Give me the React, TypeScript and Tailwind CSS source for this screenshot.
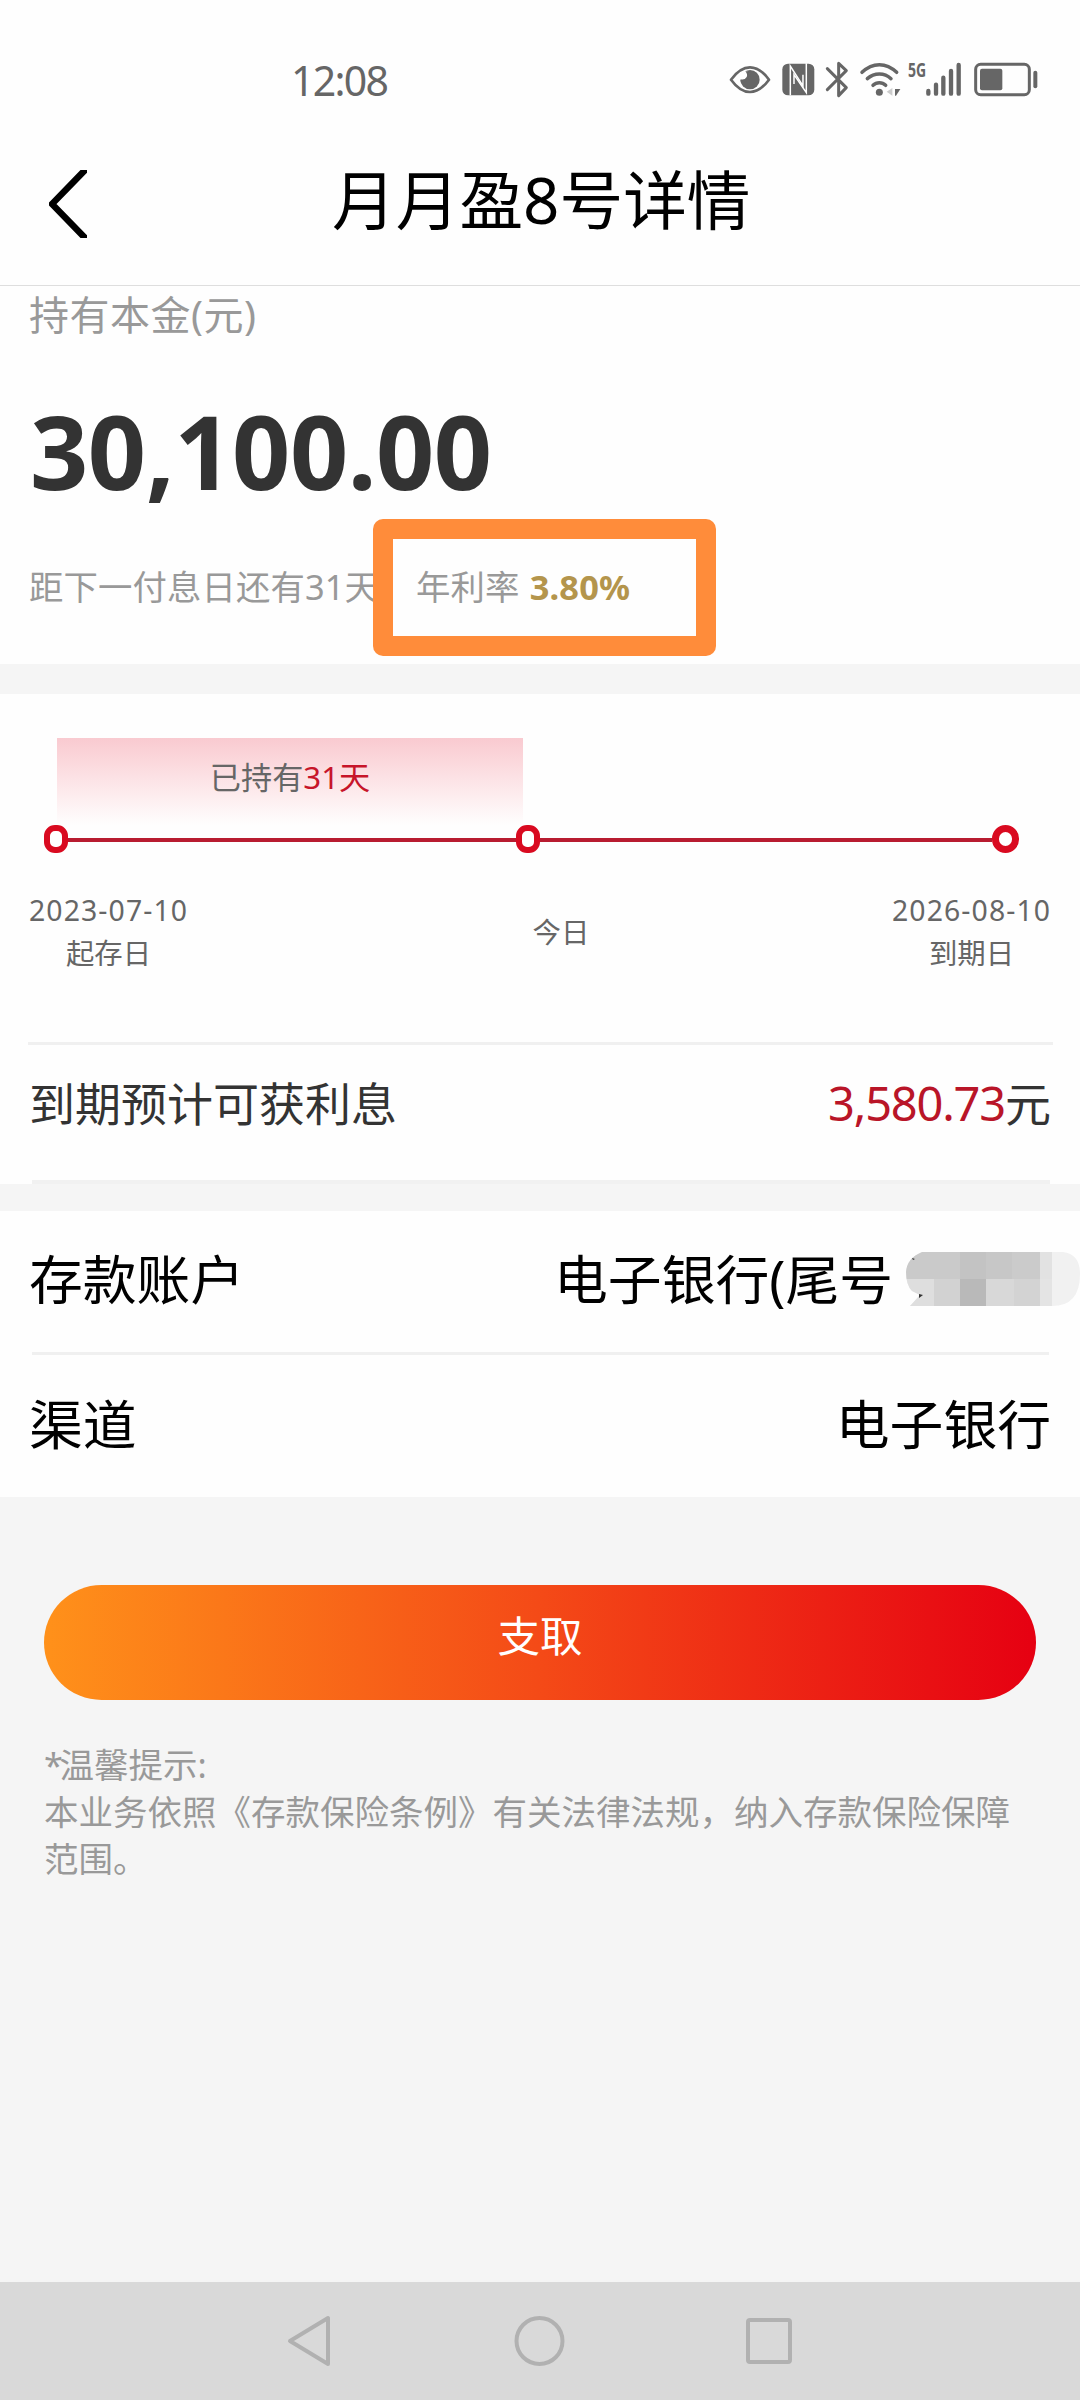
import type { ReactNode } from "react";

function StatusIcons() {
  return (
    <div className="flex h-20 text-[#666]">
      {/* eye comfort */}
      <svg className="h-20 w-[50px]" viewBox="80 0 150 240" fill="none">
        <path d="M92 119 Q119 82 149 82 Q179 82 206 119 Q179 156 149 156 Q119 156 92 119 Z" stroke="currentColor" strokeWidth="8" strokeLinejoin="round" />
        <circle cx="149" cy="119" r="29" fill="currentColor" />
        <path d="M117 121 Q117 95 136 90 Q152 100 147 113 Q141 128 117 121 Z" fill="white" />
        <path d="M135 94 Q143 104 139 111 Q133 121 121 118 L120 124 Q134 130 146 121 Q153 106 146 94 Z" fill="currentColor" />
      </svg>
      {/* NFC */}
      <svg className="h-20 w-[43.3px]" viewBox="230 0 130 240" fill="none">
        <rect x="246" y="71" width="96" height="95" rx="17" fill="currentColor" />
        <path d="M270 166 V78 L308 138 V104" stroke="white" strokeWidth="4.5" />
        <path d="M280 70 L318 128 V70" stroke="white" strokeWidth="0" />
        <path d="M318 70 V158 L281 104 V132" stroke="white" strokeWidth="4.5" />
      </svg>
      {/* bluetooth */}
      <svg className="h-20 w-[33.3px]" viewBox="360 0 100 240" fill="none">
        <path d="M382 86 L439 143 L416 167 V70 L439 92 L382 149" stroke="currentColor" strokeWidth="9" strokeLinecap="round" strokeLinejoin="round" />
      </svg>
      {/* wifi */}
      <svg className="h-20 w-[51.7px]" viewBox="460 0 155 240" fill="none">
        <path d="M484 97 Q508 74 536 74 Q564 74 588 97" stroke="currentColor" strokeWidth="10.5" strokeLinecap="round" />
        <path d="M500 116 Q516 102 536 102 Q556 102 571 116" stroke="currentColor" strokeWidth="10.5" strokeLinecap="round" />
        <path d="M517 136 Q525 128 536 128 Q547 128 555 136" stroke="currentColor" strokeWidth="10.5" strokeLinecap="round" />
        <circle cx="536" cy="157" r="10.5" fill="currentColor" />
        <path d="M575 144 V167 L558 155 Z" fill="#ccc" />
        <path d="M583 147 H599 L586 167 H583 Z" fill="currentColor" />
      </svg>
      {/* cellular signal */}
      <div className="relative">
        <span className="absolute left-[3px] top-[20px] origin-left scale-x-[0.7] font-['Noto_Sans'] text-[20px] font-bold leading-5">5G</span>
        <svg className="h-20 w-[61.7px]" viewBox="615 0 185 240" fill="none" stroke="currentColor" strokeWidth="13" strokeLinecap="round">
          <path d="M685 153 V161 M708 134 V161 M730 113 V161 M753 93 V161 M776 75 V161" />
        </svg>
      </div>
      {/* battery */}
      <svg className="h-20 w-20" viewBox="800 0 240 240" fill="none">
        <rect x="826" y="73" width="161" height="91" rx="15" stroke="currentColor" strokeWidth="9" />
        <rect x="839" y="86" width="67" height="65" rx="6" fill="currentColor" />
        <path d="M1005 98 V139" stroke="currentColor" strokeWidth="12" strokeLinecap="round" />
      </svg>
    </div>
  );
}

function Row({ label, children }: { label: string; children: ReactNode }) {
  return (
    <div className="flex items-center justify-between whitespace-nowrap pl-[29px] text-[53.8px] leading-[60px] text-black">
      <span>{label}</span>
      {children}
    </div>
  );
}

/* Pixelated cover over the account's last digits */
function Mosaic() {
  return (
    <svg className="ml-[13px] h-[54px] w-[174px]" viewBox="0 0 174 54">
      <defs>
        <clipPath id="pill">
          <path d="M16 0 H157 Q174 2 174 22 Q174 54 146 54 H4 L14 43 L6 39 Q0 33 0 20 Q1 6 16 0 Z" />
        </clipPath>
      </defs>
      <g clipPath="url(#pill)">
        <rect width="174" height="54" fill="#f1f1f1" />
        <rect width="54" height="27" fill="#cacaca" />
        <rect x="54" width="26" height="27" fill="#c3c3c3" />
        <rect x="80" width="26" height="27" fill="#c7c7c7" />
        <rect x="106" width="28" height="27" fill="#cbcbcb" />
        <rect x="134" width="12" height="27" fill="#e2e2e2" />
        <rect y="27" width="28" height="27" fill="#dedede" />
        <rect x="28" y="27" width="26" height="27" fill="#d2d2d2" />
        <rect x="54" y="27" width="26" height="27" fill="#b9b9b9" />
        <rect x="80" y="27" width="28" height="27" fill="#d8d8d8" />
        <rect x="108" y="27" width="26" height="27" fill="#d3d3d3" />
        <rect x="134" y="27" width="12" height="27" fill="#e4e4e4" />
      </g>
      <path d="M13 42 L17 43 L13 46 Z M6 6 L9 7 L7 8 Z" fill="#333" />
    </svg>
  );
}

export default function App() {
  return (
    <div className="flex h-[2400px] w-[1080px] flex-col overflow-hidden bg-[#f5f5f5] font-['Noto_Sans','Noto_Sans_CJK_SC',sans-serif]">
      <div className="flex h-[120px] justify-between bg-[#fefefe] pl-[291px] pr-[33px] pt-10">
        <span className="text-[41px] leading-[81px] tracking-[-1.7px] text-[#666]">12:08</span>
        <StatusIcons />
      </div>

      <header className="flex h-[166px] items-start border-b border-[#dedede] bg-[#fefefe] pl-[49px]">
        <svg className="mt-[50px] h-[68px] w-[38px]" viewBox="0 0 38 68" fill="none">
          <path d="M37 -1 L3 34 L37 69" stroke="black" strokeWidth="6.5" />
        </svg>
        <h1 className="ml-[245px] mt-[40px] whitespace-nowrap text-[63.7px] leading-[80px] text-black">月月盈8号详情</h1>
      </header>

      <section className="h-[378px] bg-[#fefefe] pl-[29px] pt-[9px]">
        <p className="text-[40px] leading-10 tracking-[0.5px] text-[#999]">持有本金(元)</p>
        <p className="ml-px mt-[66px] text-[102px] font-bold leading-[100px] tracking-[-0.5px] text-[#333]">30,100.00</p>
        <div className="relative mt-[66px] flex whitespace-nowrap text-[34.4px] leading-10 text-[#999]">
          <span className="w-[387px] tracking-[0.1px]">距下一付息日还有31天</span>
          <span className="tracking-[0.15px]">
            年利率 <b className="ml-px text-[#b4954c]">3.80%</b>
          </span>
          <div className="absolute left-[344px] top-[-48px] h-[137px] w-[343px] rounded-[10px] bg-[#ff8c3a] [clip-path:path(evenodd,'M0_0H343V137H0ZM20_20V117H323V20Z')]" />
        </div>
      </section>

      <section className="mt-[30px] flex h-[348px] flex-col bg-[#fefefe] pt-11">
        <div className="ml-[57px] flex h-[87px] w-[466px] justify-center bg-linear-to-b from-[#f9cad0] to-[#fefefe] pt-[19px] text-[31.2px] leading-10 text-[#666]">
          <span>
            已持有<span className="text-[#c7152a]">31天</span>
          </span>
        </div>
        <div className="ml-11 flex h-7 w-[975px] items-center">
          <i className="h-7 w-6 rounded-[11px] border-[6.5px] border-[#d90a20] bg-white" />
          <i className="mt-[2px] h-1 w-[448px] bg-[#b81c30]" />
          <i className="h-7 w-6 rounded-[11px] border-[6.5px] border-[#d90a20] bg-white" />
          <i className="mt-[2px] h-1 flex-1 bg-[#b81c30]" />
          <i className="h-7 w-[27px] rounded-full border-[7px] border-[#d90a20] bg-white" />
        </div>
        <div className="mt-9 grid grid-cols-[159px_1fr_159px] items-center px-[29px] text-center text-[28.4px] leading-[43px] text-[#666]">
          <p>
            <span className="whitespace-nowrap tracking-[1.1px]">2023-07-10</span>
            <br />
            起存日
          </p>
          <p className="pl-[42px]">今日</p>
          <p>
            <span className="whitespace-nowrap tracking-[1.1px]">2026-08-10</span>
            <br />
            到期日
          </p>
        </div>
      </section>

      <section className="relative flex h-[142px] items-start justify-between bg-[#fefefe] px-[29px] pt-[33px] text-[46px] leading-[56px] text-[#333]">
        <div className="absolute left-7 right-[27px] top-0 h-[3px] bg-[#f0f0f0]" />
        <span>到期预计可获利息</span>
        <span>
          <span className="text-[47px] tracking-[-1.2px] text-[#b91528]">3,580.73</span>元
        </span>
        <div className="absolute bottom-0 left-8 right-[30px] h-1 bg-[#f1f1f1]" />
      </section>

      <section className="mt-[27px] h-[286px] bg-[#fefefe] pt-[38px]">
        <Row label="存款账户">
          <span className="flex items-center">
            电子银行(尾号
            <Mosaic />
          </span>
        </Row>
        <div className="ml-8 mr-[31px] mt-[43px] h-[3px] bg-[#f0f0f0]" />
        <div className="mt-[39px] pr-[29px]">
          <Row label="渠道">
            <span>电子银行</span>
          </Row>
        </div>
      </section>

      <button className="mx-11 mt-[88px] h-[115px] shrink-0 rounded-full bg-linear-to-r/srgb from-[#ff911a] via-[#f44a17] to-[#e60012] pb-[13px] text-[42.5px] leading-[60px] text-white">
        支取
      </button>

      <p className="ml-11 mt-[41px] whitespace-nowrap text-[34.5px] leading-[47px] text-[#999]">
        <span className="tracking-[-3.5px]">*</span>温馨提示:<br />
        本业务依照《存款保险条例》有关法律法规，纳入存款保险保障
        <br />
        范围。
      </p>

      <nav className="mt-auto flex h-[118px] items-center justify-between bg-[#d9d9d9] pl-[287px] pr-[288px] text-[#b1b1b1]">
        <svg className="h-[52px] w-11" viewBox="0 0 44 52" fill="none">
          <path d="M41 3 V49 L3 26 Z" stroke="currentColor" strokeWidth="4" strokeLinejoin="round" />
        </svg>
        <svg className="h-[52px] w-[52px]" viewBox="0 0 52 52" fill="none">
          <circle cx="26.5" cy="26" r="23" stroke="currentColor" strokeWidth="4" />
        </svg>
        <svg className="h-[46px] w-[46px]" viewBox="0 0 46 46" fill="none">
          <rect x="2" y="2" width="42" height="42" rx="2" stroke="currentColor" strokeWidth="4" />
        </svg>
      </nav>
    </div>
  );
}
